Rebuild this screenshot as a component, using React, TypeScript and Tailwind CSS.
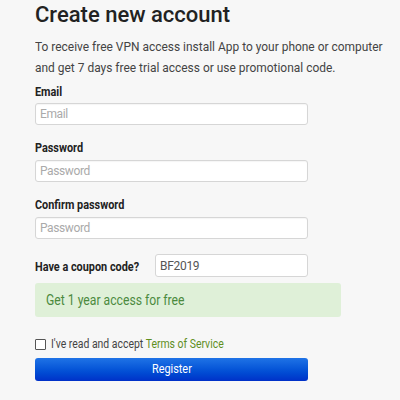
import React from "react";

function S({ children, className = "" }: { children: React.ReactNode; className?: string }) {
  return <span className={"inline-block origin-left scale-x-[0.87] whitespace-nowrap " + className}>{children}</span>;
}

export default function App() {
  const font = { fontFamily: "Roboto, 'Liberation Sans', Arial, sans-serif" };
  const inputCls =
    "w-[273px] h-[22px] bg-white border border-[#d6d6d6] rounded-[3px] px-[4px] text-[12px] tracking-[-0.4px] placeholder:text-[#aaa] outline-none shadow-[inset_0_1px_1px_rgba(0,0,0,0.04)]";
  return (
    <div className="w-[400px] h-[400px] bg-[#f7f7f7] text-[#333] overflow-hidden" style={font}>
      <div className="pl-[35px] flex flex-col">
        <h1 className="text-[22px] leading-[30px] font-medium text-[#222]">Create new account</h1>
        <p className="mt-[6px] w-[400px] origin-left scale-x-[0.885] text-[13.5px] leading-[21px] text-[#444]">
          To receive free VPN access install App to your phone or computer and get 7 days free trial access or use promotional code.
        </p>
        <label className="mt-[5px] text-[12.5px] leading-[18px] font-bold text-[#222]">
          <S>Email</S>
        </label>
        <input className={"mt-[2px] " + inputCls} placeholder="Email" />
        <label className="mt-[14px] text-[12.5px] leading-[18px] font-bold text-[#222]">
          <S>Password</S>
        </label>
        <input className={"mt-[3px] " + inputCls} placeholder="Password" />
        <label className="mt-[14px] text-[12.5px] leading-[18px] font-bold text-[#222]">
          <S>Confirm password</S>
        </label>
        <input className={"mt-[3px] " + inputCls} placeholder="Password" />
        <div className="mt-[15px] flex items-center h-[23px]">
          <span className="w-[120px] text-[12.5px] font-bold text-[#222] pt-[4px]">
            <S>Have a coupon code?</S>
          </span>
          <input
            className="w-[153px] h-[23px] bg-white border border-[#d6d6d6] rounded-[3px] px-[4px] text-[12px] tracking-[-0.3px] text-[#555] outline-none"
            defaultValue="BF2019"
          />
        </div>
        <div className="mt-[6px] w-[306px] h-[34px] bg-[#dff0d8] rounded-[3px] flex items-center pl-[11px] text-[14px] text-[#4b8a3e]">
          <S>Get 1 year access for free</S>
        </div>
        <div className="mt-[20px] flex items-center h-[14px]">
          <span className="w-[11px] h-[11px] border border-[#555] rounded-[1px] bg-white"></span>
          <span className="ml-[5px] text-[12px] text-[#444]">
            <S>
              I've read and accept <span className="text-[#5f8f1f]">Terms of Service</span>
            </S>
          </span>
        </div>
        <button className="mt-[7px] w-[273px] h-[23px] rounded-[3px] bg-gradient-to-b from-[#1f73e6] to-[#0030c8] text-white text-[12.5px] flex items-center justify-center">
          <span className="inline-block scale-x-[0.87]">Register</span>
        </button>
      </div>
    </div>
  );
}
